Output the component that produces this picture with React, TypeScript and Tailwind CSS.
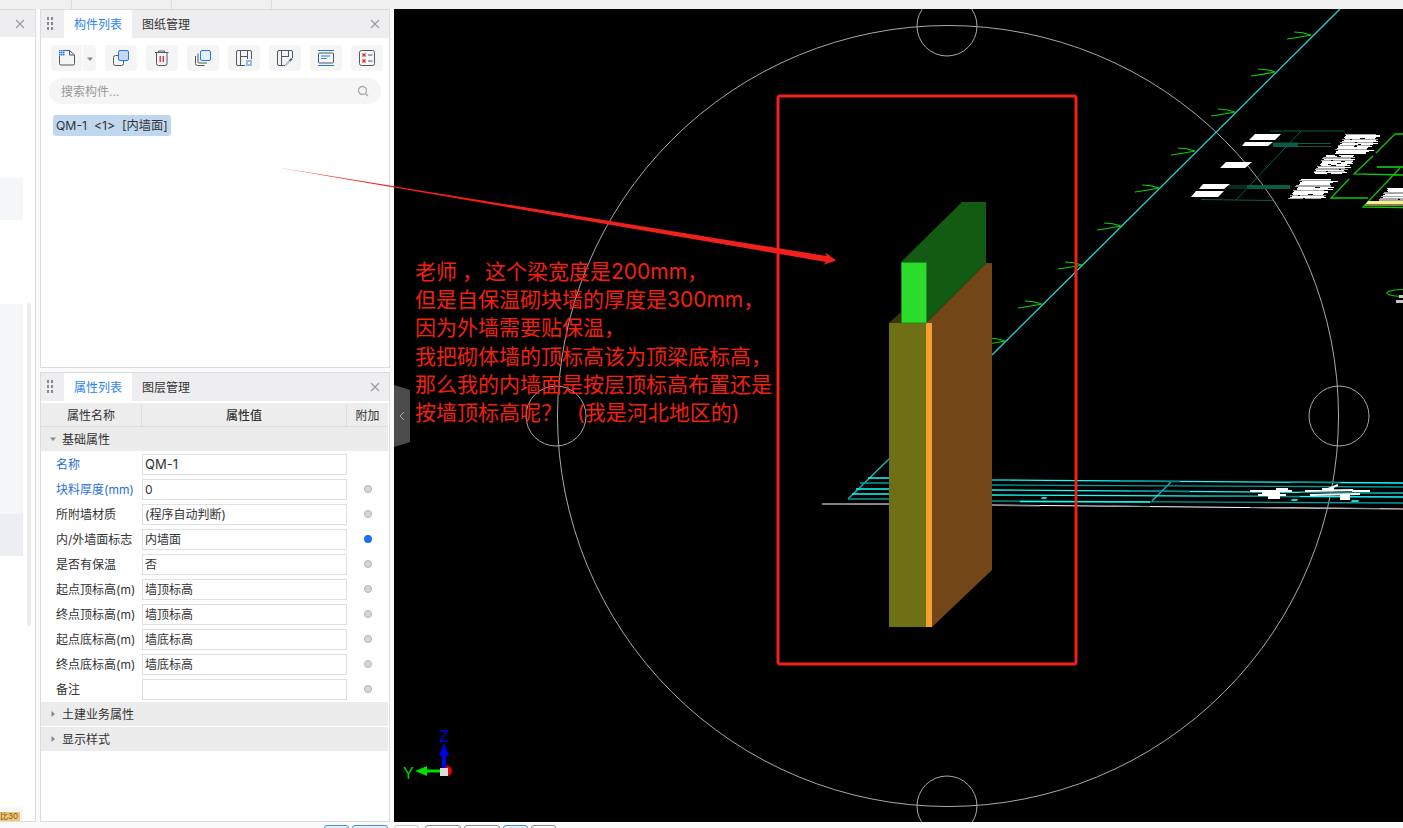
import React from "react";

const rows: [string, string, number][] = [
  ["名称", "QM-1", -1],
  ["块料厚度(mm)", "0", 0],
  ["所附墙材质", "(程序自动判断)", 0],
  ["内/外墙面标志", "内墙面", 1],
  ["是否有保温", "否", 0],
  ["起点顶标高(m)", "墙顶标高", 0],
  ["终点顶标高(m)", "墙顶标高", 0],
  ["起点底标高(m)", "墙底标高", 0],
  ["终点底标高(m)", "墙底标高", 0],
  ["备注", "", 0],
];

function Dots() {
  return (
    <svg width="6" height="14" viewBox="0 0 6 14" className="text-[#8a8a8a]">
      {[0, 5, 10].map((y) =>
        [0, 4].map((x) => <rect key={`${x}-${y}`} x={x} y={y} width="2" height="3" fill="currentColor" />)
      )}
    </svg>
  );
}

function Close() {
  return (
    <svg width="10" height="10" viewBox="0 0 10 10">
      <path d="M1 1L9 9M9 1L1 9" stroke="#9a9a9a" strokeWidth="1.1" fill="none" />
    </svg>
  );
}

function PanelHeader({ a, b }: { a: string; b: string }) {
  return (
    <div className="flex h-[28px] shrink-0 items-stretch bg-[#eeeef0] text-[12px] leading-none">
      <div className="flex w-[23px] items-center justify-start pl-[6px]">
        <Dots />
      </div>
      <div className="flex w-[68px] items-center justify-center bg-white pt-[1px] text-[#2a84ee]">{a}</div>
      <div className="flex w-[68px] items-center justify-center pt-[1px] text-[#333]">{b}</div>
      <div className="ml-auto flex w-[28px] items-center justify-center">
        <Close />
      </div>
    </div>
  );
}

const ink = "#4f5866";
const blue = "#1f7aec";

function ToolIcon({ i }: { i: number }) {
  return (
    <svg width="16" height="16" viewBox="0 0 16 16" fill="none">
      {i === 2 && (
        <>
          <rect x="0.5" y="5.5" width="10" height="10" rx="2" stroke={ink} />
          <rect x="5.5" y="0.5" width="10" height="10" rx="1.5" fill="#c3d9f3" stroke={blue} />
        </>
      )}
      {i === 3 && (
        <>
          <path d="M4.5 2.5V1h6v1.5M1 2.5h13.5" stroke={ink} />
          <path d="M2.5 2.5v11a2 2 0 002 2h6.5a2 2 0 002-2v-11" stroke={ink} />
          <path d="M6.2 6v6M9.3 6v6" stroke="#e0242a" strokeWidth="1.3" />
        </>
      )}
      {i === 4 && (
        <>
          <path d="M0.5 6v7.5a2 2 0 002 2h7" stroke={ink} />
          <path d="M3 3.5v8.5a1 1 0 001 1h8" stroke={ink} />
          <rect x="5.5" y="0.5" width="10" height="10" rx="1.5" fill="#e6f0fb" stroke={blue} />
        </>
      )}
      {i === 5 && (
        <>
          <path d="M9 15.5H2a1.5 1.5 0 01-1.5-1.5V2A1.5 1.5 0 012 .5h12A1.5 1.5 0 0115.5 2v7" stroke={ink} />
          <path d="M4.5 1v14M11.5 1v8M4.5 6.5h7" stroke={ink} />
          <rect x="10" y="10" width="6" height="6" fill="#8fbdf0" />
          <rect x="12" y="12" width="2" height="2" fill="#fff" />
        </>
      )}
      {i === 6 && (
        <>
          <path d="M8 15.5H2a1.5 1.5 0 01-1.5-1.5V2A1.5 1.5 0 012 .5h12A1.5 1.5 0 0115.5 2v6" stroke={ink} />
          <path d="M4.5 1v14M11.5 1v6M4.5 6.5h7" stroke={ink} />
          <path d="M8.5 15.5L12.5 11" stroke="#a9c0da" strokeWidth="2" />
          <path d="M12.5 11L15 8.5" stroke="#666" strokeWidth="2.2" />
        </>
      )}
      {i === 7 && (
        <>
          <path d="M0 .5h16M0 15.5h16" stroke={blue} />
          <rect x="0.5" y="3" width="15" height="10" rx="1" stroke={ink} />
          <path d="M3 6h9M3 8.5h5.5" stroke={blue} />
        </>
      )}
      {i === 8 && (
        <>
          <rect x="0.5" y="0.5" width="15" height="15" rx="2" stroke={ink} />
          <path d="M3.5 3.5l3 3M6.5 3.5l-3 3M3.5 9.5l3 3M6.5 9.5l-3 3" stroke="#e0242a" strokeWidth="1.2" />
          <path d="M9 5h4.5M9 11h4.5" stroke={ink} />
        </>
      )}
    </svg>
  );
}

function NewIcon() {
  return (
    <svg width="16" height="16" viewBox="0 0 16 16" fill="none">
      <path d="M5 .5h5.5l5 4.5v8.5a1.5 1.5 0 01-1.5 1.5H2a1.5 1.5 0 01-1.5-1.5V6" stroke={ink} />
      <path d="M10.5 .5v4.5h5" stroke={ink} />
      {[0, 2, 4].map((y) =>
        [0, 2, 4].map((x) => <rect key={`${x}${y}`} x={x} y={y} width="1.5" height="1.5" fill={blue} />)
      )}
    </svg>
  );
}

function Tri({ down }: { down?: boolean }) {
  return (
    <svg width="6" height="6" viewBox="0 0 6 6">
      {down ? <path d="M0 1.5h6L3 5z" fill="#888" /> : <path d="M1.5 0v6L5 3z" fill="#888" />}
    </svg>
  );
}

function GroupRow({ label, down, className }: { label: string; down?: boolean; className?: string }) {
  return (
    <div className={`flex h-[24px] shrink-0 items-center bg-[#ececec] pl-[9px] text-[12px] leading-none text-[#333] ${className ?? ""}`}>
      <span className="flex w-[12px]">
        <Tri down={down} />
      </span>
      <span className="pt-[1px]">{label}</span>
    </div>
  );
}

function Blob({ x, y, w, h, seed }: { x: number; y: number; w: number; h: number; seed: number }) {
  const out: React.ReactNode[] = [];
  let r = seed;
  for (let k = 0; k < h; k++) {
    r = (r * 37 + 11) % 101;
    const off = (h - k) * 0.65;
    const gray = r % 4 === 0;
    const gap = r % 3 === 0;
    out.push(
      <rect key={`a${k}`} x={Math.round(x + off + (r % 4))} y={y + k} width={w - (r % 7)} height="1" fill={gray ? "#a8a8a8" : "#ffffff"} />
    );
    if (gap) out.push(<rect key={`b${k}`} x={Math.round(x + off + 8 + (r % 17))} y={y + k} width={2 + (r % 4)} height="1" fill="#000" />);
  }
  return <g>{out}</g>;
}

const ticks: [number, number][] = [
  [1311, 35],
  [1275, 72],
  [1235, 112],
  [1195, 151],
  [1159, 188],
  [1121, 226],
  [1082, 265],
  [1042, 304],
  [1005, 341],
];

function Scene() {
  return (
    <svg className="absolute inset-0 h-full w-full" viewBox="394 9 1009 813" fill="none">
      {/* grid circles */}
      <g stroke="#a8a8a8" strokeWidth="1">
        <circle cx="948" cy="416" r="390.5" />
        <circle cx="947" cy="26" r="30" />
        <circle cx="947" cy="806" r="30" />
        <circle cx="556" cy="416" r="30" />
        <circle cx="1339" cy="416" r="30" />
      </g>
      {/* axis line and rebar ticks */}
      <path d="M1340 9L992 355" stroke="#22d8d8" strokeWidth="1.3" />
      {ticks.map(([x, y]) => (
        <path key={x} d={`M${x} ${y}Q${x - 8} ${y - 3} ${x - 17} ${y - 3}M${x} ${y}Q${x - 10} ${y + 2} ${x - 24} ${y + 4}`} stroke="#0bd00b" strokeWidth="1.2" />
      ))}
      {/* teal plan */}
      <g stroke="#0a5c46">
        <path d="M1270 131H1345M1301 131L1236 200M1201 199.5L1273 200.5" />
        <path d="M1273 143.5H1331M1273 146.5H1331M1228 186H1290M1228 188H1290" />
        <path d="M1273 144.5H1298" strokeWidth="4" />
        <path d="M1247 187H1290" strokeWidth="4" />
      </g>
      <g fill="#fff">
        <path d="M1255 134h26l-6 6h-26zM1245 142h28l-5 4h-26zM1226 162h26l-7 6h-25zM1203 184h27l-6 5h-25zM1196 191h28l-6 6h-27z" />
      </g>
      <Blob x={1332} y={134} w={36} h={20} seed={7} />
      <Blob x={1312} y={155} w={33} h={19} seed={23} />
      <Blob x={1287} y={179} w={36} h={20} seed={41} />
      {/* green plan */}
      <g stroke="#0bc80b" strokeWidth="1.3">
        <path d="M1395 134L1376 153M1395 134H1403M1373 156L1354 174L1403 175M1349 179L1331 198H1368M1400 168L1363 207L1403 207.5" />
        <path d="M1377 167H1403" stroke="#19ff19" />
      </g>
      <Blob x={1378} y={188} w={30} h={13} seed={59} />
      <path d="M1368 201h35v4h-38z" fill="#f4f08c" />
      <path d="M1366 204h37v2h-38z" fill="#8d7a3c" />
      <ellipse cx="1405" cy="293" rx="18" ry="3.5" stroke="#0bc40b" strokeWidth="1.2" />
      <path d="M1399 295h4v3h-4zM1396 300h7v3h-7z" fill="#c8c8c8" />
      {/* floor lines */}
      <g strokeWidth="1.3">
        <path d="M848 499L889 459" stroke="#14c0c0" />
        <path d="M1171 482L1152 501" stroke="#14c0c0" />
      </g>
      <g strokeWidth="1.3">
        <path d="M868 478H889M992 480L1403 483" stroke="#12ffff" />
        <path d="M992 480L1010 480.2M1120 481L1180 481.5M1290 482L1340 482.5" stroke="#0a8a8a" />
        <path d="M860 483H889M992 485L1403 487" stroke="#0a9a9a" />
        <path d="M856 489H889M992 490L1403 493" stroke="#12ffff" />
        <path d="M1130 491L1190 491.5M1300 492L1403 493" stroke="#0a8a8a" />
        <path d="M852 494H889M992 495L1403 497" stroke="#12ffff" />
        <path d="M1200 496L1300 496.5" stroke="#0a8a8a" />
        <path d="M848 499H889M992 501L1403 503" stroke="#0a9a9a" />
        <path d="M1020 501.5L1150 502" stroke="#12ffff" />
      </g>
      <path d="M822 504H889M992 505L1403 509" stroke="#fff" strokeWidth="1.2" />
      <path d="M850 504.5H889M1000 505.5L1040 506M1110 506L1150 506.5M1250 507.5L1290 508M1320 508L1380 508.5" stroke="#8a8a8a" strokeWidth="1.2" />
      <path d="M1250 491H1292M1305 491l48 -1M1328 489l10 -4M1352 491h18M1258 495h28M1310 495l50 -1" stroke="#fff" strokeWidth="2" />
      <path d="M1262 492h18v2h-18zM1276 488h12v3h-12zM1268 496h12v3h-12zM1340 495h10v5h-10zM1322 488h12v2h-12z" fill="#fff" />
      <path d="M1042 497h5l-1 2h-5zM1292 499h6l-1 2h-6zM1352 500h7l-1 2h-7z" fill="#1bd8d8" />
      {/* wall body */}
      <path d="M889 323L901 312V323Z" fill="#3a3410" />
      <path d="M926 323L986 263H992V570L932 627H926Z" fill="#734617" />
      <rect x="889" y="323" width="37" height="304" fill="#6f6f15" />
      <rect x="926" y="323" width="6" height="304" fill="#f59f2d" />
      <path d="M926 323V262H901L962 202H986V263Z" fill="#135a13" />
      <rect x="901.5" y="262.5" width="25" height="60.5" fill="#2bdc2b" stroke="#1c8f1c" />
      {/* red frame */}
      <rect x="778" y="96" width="298" height="568" rx="2" stroke="#f0201a" strokeWidth="3" />
      {/* axis gizmo */}
      <circle cx="447" cy="771" r="5" fill="#f00000" />
      <path d="M444 743L449 756H446V769H442V756H439Z" fill="#0000e6" />
      <path d="M415 771L427 766V769.5H441V772.5H427V776Z" fill="#00e000" />
      <rect x="440" y="768" width="8" height="8" fill="#dcdcdc" />
    </svg>
  );
}

export default function App() {
  return (
    <div className="relative h-[828px] w-[1403px] overflow-hidden bg-[#fbfbfb] text-[#333] [font-family:Inter,'Noto_Sans_CJK_SC',sans-serif]">
      {/* top strip */}
      <div className="flex h-[9px] bg-[#f0f0f0]">
        <div className="w-[72px] border-r border-[#dcdcdc]" />
        <div className="w-[100px] border-r border-[#dcdcdc]" />
        <div className="w-[100px] border-r border-[#dcdcdc]" />
      </div>

      <div className="flex h-[813px]">
        {/* clipped left panel */}
        <div className="mr-[4px] flex w-[36px] shrink-0 flex-col border-r border-b border-[#dcdcdc] bg-white">
          <div className="flex h-[28px] shrink-0 items-center justify-end border-t border-[#dcdcdc] bg-[#eeeef0] pr-[10px]">
            <Close />
          </div>
          <div className="flex min-h-0 flex-1">
            <div className="flex w-[23px] flex-col">
              <div className="mt-[141px] h-[42px] bg-[#f5f6f8]" />
              <div className="mt-[84px] h-[210px] bg-[#f5f6f8]" />
              <div className="h-[42px] bg-[#eceef1]" />
              <div className="mt-auto h-[14px] bg-[#f7f7f7] pt-[5px]">
                <div className="h-[9px] w-[20px] whitespace-nowrap bg-[#efc578] text-[8px] leading-[9px] text-[#7a5a20]">比30</div>
              </div>
            </div>
            <div className="ml-[4px] mt-[266px] h-[323px] w-[4px] rounded-full bg-[#ececec]" />
          </div>
        </div>

        {/* middle column */}
        <div className="mr-[4px] flex w-[350px] shrink-0 flex-col gap-[4px]">
          <div className="flex h-[359px] shrink-0 flex-col border border-[#dcdcdc] bg-white">
            <PanelHeader a="构件列表" b="图纸管理" />
            <div className="flex gap-[9px] pl-[10px] pt-[7px]">
              <div className="flex h-[26px] w-[45px] rounded-[4px] bg-[#f5f5f6]">
                <div className="flex w-[32px] items-center justify-center border-r border-white">
                  <NewIcon />
                </div>
                <div className="flex flex-1 items-center justify-center pt-[2px]">
                  <Tri down />
                </div>
              </div>
              {[2, 3, 4, 5, 6, 7, 8].map((i) => (
                <div key={i} className="flex h-[26px] w-[32px] items-center justify-center rounded-[4px] bg-[#f5f5f6]">
                  <ToolIcon i={i} />
                </div>
              ))}
            </div>
            <div className="mx-[8px] mt-[7px] flex h-[26px] items-center justify-between rounded-full bg-[#f5f5f6] pl-[12px] pr-[12px] text-[12px] leading-none text-[#999]">
              <span className="pt-[1px]">搜索构件...</span>
              <svg width="12" height="12" viewBox="0 0 12 12" fill="none">
                <circle cx="5.5" cy="5.5" r="4" stroke="#aaa" strokeWidth="1.3" />
                <path d="M8.5 8.5L11 11" stroke="#aaa" strokeWidth="1.3" />
              </svg>
            </div>
            <div className="ml-[12px] mt-[11px] flex h-[21px] w-[118px] items-center whitespace-pre rounded-[3px] bg-[#c0d7ef] pl-[3px] pt-[1px] text-[12.25px] leading-none text-[#333]">
              QM-1  {"<1>"}  [内墙面]
            </div>
          </div>

          <div className="flex h-[450px] shrink-0 flex-col border border-[#dcdcdc] bg-white">
            <PanelHeader a="属性列表" b="图层管理" />
            <div className="mt-[2px] flex h-[24px] w-[347px] shrink-0 border-b border-[#dcdcdc] bg-[#ededee] pt-[2px] text-[12px] leading-none text-[#333]">
              <div className="flex w-[101px] items-center justify-center border-r border-[#dcdcdc]">属性名称</div>
              <div className="flex w-[205px] items-center justify-center border-r border-[#dcdcdc] font-medium">属性值</div>
              <div className="flex flex-1 items-center justify-center">附加</div>
            </div>
            <GroupRow label="基础属性" down className="w-[347px]" />
            <div className="flex w-[347px] flex-col pt-[1px]">
              {rows.map(([label, value, dot], i) => (
                <div key={i} className="flex h-[25px] items-center text-[12px] leading-none">
                  <div className={`w-[101px] whitespace-nowrap pl-[15px] ${i < 2 ? "text-[#2a6fdb]" : "text-[#333]"}`}>{label}</div>
                  <div className={`flex h-[21px] w-[205px] items-center border border-[#e0e0e0] pl-[2px] text-[#333] ${i === 0 ? "text-[13px]" : ""}`}>{value}</div>
                  <div className="mb-[2px] flex flex-1 justify-center">
                    {dot >= 0 && (
                      <span className={`h-[8px] w-[8px] rounded-full ${dot ? "bg-[#1a73e8]" : "border border-[#b4b4b4] bg-[#d6d6d6]"}`} />
                    )}
                  </div>
                </div>
              ))}
            </div>
            <GroupRow label="土建业务属性" className="w-[347px]" />
            <GroupRow label="显示样式" className="mt-[1px] w-[347px]" />
          </div>
        </div>

        {/* canvas */}
        <div className="relative w-[1009px] shrink-0 overflow-hidden bg-black">
          <Scene />
          <div className="absolute left-[21px] top-[249px] flex flex-col whitespace-pre text-[21px] leading-[28.2px] text-[#f2200f]">
            <div>
              老师<span className="ml-[5px]">，</span><span className="ml-[2px]">这个梁宽度是200mm，</span>
            </div>
            <div>但是自保温砌块墙的厚度是300mm，</div>
            <div>因为外墙需要贴保温，</div>
            <div>我把砌体墙的顶标高该为顶梁底标高，</div>
            <div>那么我的内墙面是按层顶标高布置还是</div>
            <div>
              按墙顶标高呢？<span className="ml-[15px]">(我是河北地区的)</span>
            </div>
          </div>
          <div className="absolute left-[45px] top-[719px] text-[16px] leading-none text-[#0000e6]">Z</div>
          <div className="absolute left-[9px] top-[756px] text-[16px] leading-none text-[#00d000]">Y</div>
          <div className="absolute left-0 top-[376px] flex h-[62px] w-[16px] items-center justify-center bg-[#4c4c4c] [clip-path:polygon(0_0,100%_8%,100%_92%,0_100%)]">
            <svg width="6" height="10" viewBox="0 0 6 10" fill="none">
              <path d="M5 1L1 5L5 9" stroke="#a8a8a8" />
            </svg>
          </div>
        </div>
      </div>

      {/* bottom strip */}
      <div className="relative h-[6px] overflow-hidden bg-[#fbfbfb]">
        <div className="ml-[324px] mt-[3px] flex gap-[3px]">
          <div className="h-[10px] w-[25px] rounded-t-[3px] border border-[#4a90e2] bg-[#e8f1fb]" />
          <div className="h-[10px] w-[36px] rounded-t-[3px] border border-[#4a90e2] bg-[#e8f1fb]" />
          <div className="ml-[3px] h-[10px] w-[25px] rounded-t-[3px] border border-[#c4c4c4] bg-white" />
          <div className="ml-[3px] h-[10px] w-[36px] rounded-t-[3px] border border-[#8a8a8a] bg-white" />
          <div className="h-[10px] w-[36px] rounded-t-[3px] border border-[#8a8a8a] bg-white" />
          <div className="h-[10px] w-[25px] rounded-t-[3px] border border-[#4a90e2] bg-[#e8f1fb]" />
          <div className="h-[10px] w-[25px] rounded-t-[3px] border border-[#8a8a8a] bg-white" />
        </div>
      </div>

      {/* leader arrow drawn across the panel and canvas */}
      <svg className="pointer-events-none absolute inset-0 h-full w-full" viewBox="0 0 1403 828" fill="none">
        <path d="M275 167L826.5 256L825.5 252.5L836 260.5L823 265L826 262Z" fill="#f0201a" />
      </svg>
    </div>
  );
}
